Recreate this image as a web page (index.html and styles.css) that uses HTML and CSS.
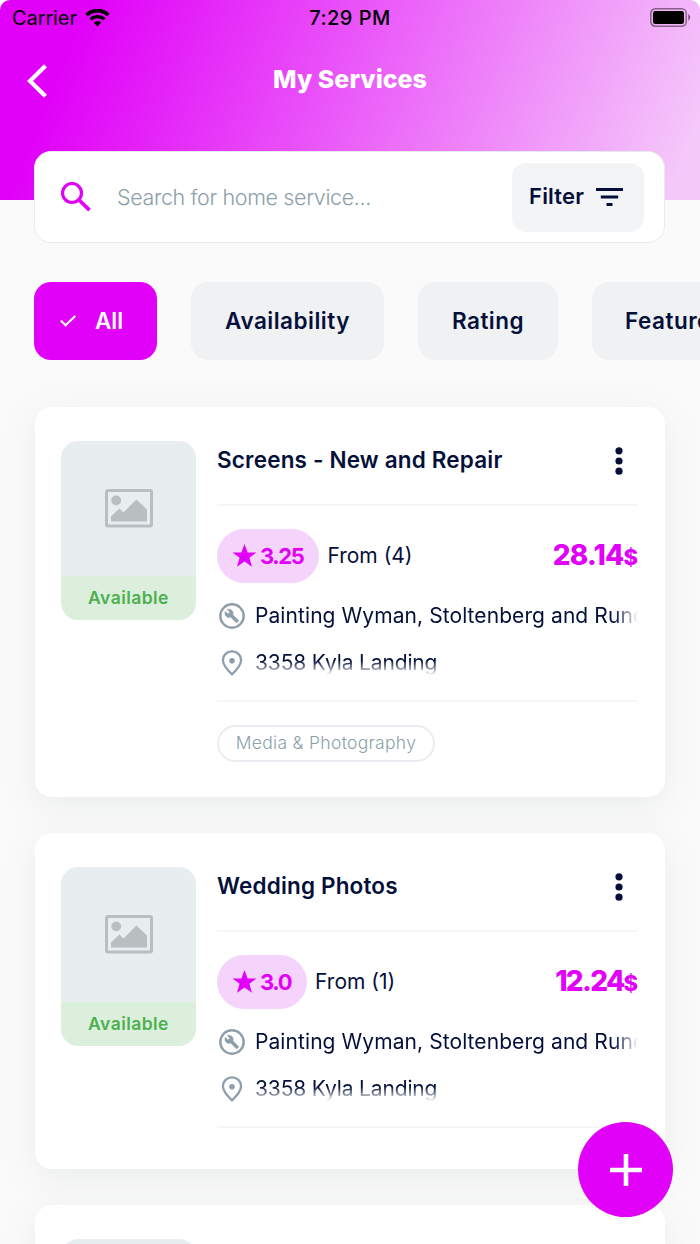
FILE: index.html
```
<!DOCTYPE html>
<html lang="en">
<head>
    <meta charset="UTF-8">
    <meta name="viewport" content="width=device-width, initial-scale=1.0">
    <title>My Services</title>
    <link rel="stylesheet" href="styles.css">
</head>
<body>

    <!-- Shared icons -->
    <svg class="sprite" width="0" height="0">
        <symbol id="icon-picture" viewBox="0 0 48 39">
            <rect x="1.5" y="1.5" width="45" height="35.5" rx="1.5" fill="none" stroke="currentColor" stroke-width="3"/>
            <circle cx="11.2" cy="11.4" r="4.9" fill="currentColor"/>
            <path d="M6 32.5V27.5L14.4 19.5L18.5 23.5L31.4 10.5L42 20.5V32.5Z" fill="currentColor"/>
        </symbol>
        <symbol id="icon-star" viewBox="0 0 24 24">
            <path d="M12 0L15.1 8.4H24L16.9 13.7L19.5 22.8L12 17.5L4.5 22.8L7.1 13.7L0 8.4H8.9Z" fill="currentColor"/>
        </symbol>
        <symbol id="icon-build" viewBox="0 0 26 26">
            <circle cx="13" cy="13" r="11.7" fill="none" stroke="currentColor" stroke-width="2.4"/>
            <path d="M19.4 17.3L13.9 11.8C14.5 10.3 14.2 8.6 13 7.4C11.7 6.1 9.8 5.8 8.2 6.5L10.9 9.2L9 11.1L6.3 8.4C5.5 10 5.9 11.9 7.2 13.2C8.4 14.4 10.1 14.7 11.6 14.1L17.1 19.6C17.4 19.9 17.8 19.9 18.1 19.6L19.4 18.3C19.7 18 19.7 17.6 19.4 17.3Z" fill="currentColor" stroke="currentColor" stroke-width="0.5"/>
        </symbol>
        <symbol id="icon-place" viewBox="0 0 26 26">
            <path d="M13 1.4C7.9 1.4 3.9 5.2 3.9 10.1C3.9 14.5 7 18.8 13 24.3C19 18.8 22.1 14.5 22.1 10.1C22.1 5.2 18.1 1.4 13 1.4Z" fill="none" stroke="currentColor" stroke-width="2.3"/>
            <circle cx="13" cy="10.8" r="2.8" fill="currentColor"/>
        </symbol>
        <symbol id="icon-more" viewBox="0 0 8 28">
            <circle cx="4" cy="3.8" r="3.6" fill="currentColor"/>
            <circle cx="4" cy="14" r="3.6" fill="currentColor"/>
            <circle cx="4" cy="24.2" r="3.6" fill="currentColor"/>
        </symbol>
    </svg>

    <div class="screen">
        <header class="header">
            <div class="status-bar">
                <div class="carrier">
                    <span>Carrier</span>
                    <svg width="25" height="18" viewBox="0 0 25 18">
                        <path d="M1.6 6A15.6 15.6 0 0 1 23.4 6" fill="none" stroke="#000" stroke-width="3.7"/>
                        <path d="M5.7 10.4A9.7 9.7 0 0 1 19.3 10.4" fill="none" stroke="#000" stroke-width="3.2"/>
                        <path d="M12.5 17.4L8.7 13.6A5.4 5.4 0 0 1 16.3 13.6Z" fill="#000"/>
                    </svg>
                </div>
                <span class="time">7:29 PM</span>
                <svg class="battery" width="41" height="19" viewBox="0 0 41 19">
                    <rect x="0.8" y="0.8" width="35.4" height="17.4" rx="4.5" fill="none" stroke="#000" stroke-opacity="0.45" stroke-width="1.5"/>
                    <rect x="3" y="3" width="31" height="13" rx="2.5" fill="#000"/>
                    <path d="M38.2 6.3C40.9 7.4 40.9 11.6 38.2 12.7Z" fill="#000" fill-opacity="0.5"/>
                </svg>
            </div>
            <div class="nav-bar">
                <svg class="back" width="21" height="34" viewBox="0 0 21 34">
                    <path d="M18.5 1.7L3 17L18.5 32.3" fill="none" stroke="#fff" stroke-width="4.2"/>
                </svg>
                <h1>My Services</h1>
            </div>
        </header>

        <div class="search">
            <svg width="30" height="30" viewBox="0 0 30 30">
                <circle cx="11" cy="11" r="9.5" fill="none" stroke="currentColor" stroke-width="3.2"/>
                <path d="M18 18L28.5 28.2" stroke="currentColor" stroke-width="3.8"/>
            </svg>
            <span class="placeholder">Search for home service...</span>
            <button class="filter">
                <span>Filter</span>
                <svg width="27" height="18" viewBox="0 0 27 18">
                    <path d="M0 1.6H27M4.8 9H22.2M10.5 16.4H16.5" stroke="currentColor" stroke-width="3"/>
                </svg>
            </button>
        </div>

        <nav class="tabs">
            <a class="tab active">
                <svg width="16" height="12" viewBox="0 0 16 12">
                    <path d="M0.8 5.6L5.6 10.3L15.2 1" fill="none" stroke="#fff" stroke-width="2.1"/>
                </svg>
                <span>All</span>
            </a>
            <a class="tab tab-availability"><span>Availability</span></a>
            <a class="tab tab-rating"><span>Rating</span></a>
            <a class="tab tab-featured"><span>Featured</span></a>
        </nav>

        <main class="services">
            <article class="card">
                <div class="thumb">
                    <div class="picture"><svg width="48" height="39"><use href="#icon-picture"/></svg></div>
                    <div class="status">Available</div>
                </div>
                <div class="details">
                    <div class="title-row">
                        <h2>Screens - New and Repair</h2>
                        <svg width="8" height="28"><use href="#icon-more"/></svg>
                    </div>
                    <div class="rating-row">
                        <span class="badge"><svg width="25" height="24"><use href="#icon-star"/></svg><b>3.25</b></span>
                        <span class="from">From (4)</span>
                        <span class="price">28.14<small>$</small></span>
                    </div>
                    <div class="info">
                        <svg width="26" height="26"><use href="#icon-build"/></svg>
                        <span class="provider">Painting Wyman, Stoltenberg and Runolfsson</span>
                    </div>
                    <div class="info">
                        <svg width="26" height="26"><use href="#icon-place"/></svg>
                        <span class="address">3358 Kyla Landing</span>
                    </div>
                    <div class="categories"><span class="chip">Media &amp; Photography</span></div>
                </div>
            </article>

            <article class="card">
                <div class="thumb">
                    <div class="picture"><svg width="48" height="39"><use href="#icon-picture"/></svg></div>
                    <div class="status">Available</div>
                </div>
                <div class="details">
                    <div class="title-row">
                        <h2>Wedding Photos</h2>
                        <svg width="8" height="28"><use href="#icon-more"/></svg>
                    </div>
                    <div class="rating-row">
                        <span class="badge"><svg width="25" height="24"><use href="#icon-star"/></svg><b>3.0</b></span>
                        <span class="from">From (1)</span>
                        <span class="price tight">12.24<small>$</small></span>
                    </div>
                    <div class="info">
                        <svg width="26" height="26"><use href="#icon-build"/></svg>
                        <span class="provider">Painting Wyman, Stoltenberg and Runolfsson</span>
                    </div>
                    <div class="info">
                        <svg width="26" height="26"><use href="#icon-place"/></svg>
                        <span class="address">3358 Kyla Landing</span>
                    </div>
                    <div class="categories empty"></div>
                </div>
            </article>

            <article class="card">
                <div class="thumb">
                    <div class="picture"></div>
                </div>
            </article>
        </main>

        <button class="add">
            <svg width="32" height="32" viewBox="0 0 32 32">
                <path d="M16 0V32M0 16H32" stroke="#fff" stroke-width="4.6"/>
            </svg>
        </button>
    </div>

</body>
</html>
```
FILE: styles.css
```
/* Basic Reset */
* {
    margin: 0;
    padding: 0;
    box-sizing: border-box;
}

body {
    font-family: "Inter", "Open Sans", sans-serif;
    background-color: #fff;
    color: #04103a;
    overflow: hidden;
}

svg {
    display: block;
    flex: none;
}

button {
    border: none;
    font-family: inherit;
    color: inherit;
    cursor: pointer;
}

.sprite {
    position: absolute;
}

.screen {
    position: relative;
    width: 700px;
    height: 1244px;
    overflow: hidden;
    background-color: #fafafa;
    border-radius: 10px 10px 0 0;
}

/* Header */
.header {
    height: 200px;
    background: linear-gradient(112deg, #e100f8 11%, #f5c8fa 96%);
}

.status-bar {
    display: grid;
    grid-template-columns: 1fr auto 1fr;
    align-items: center;
    height: 35px;
    padding: 0 9px 0 12px;
    color: #000;
    font-size: 20px;
}

.carrier {
    display: flex;
    align-items: center;
    gap: 9px;
}

.carrier span {
    width: 64px;
    letter-spacing: -0.1px;
}

.time {
    padding-right: 3px;
    font-weight: 500;
    letter-spacing: 0.45px;
}

.battery {
    justify-self: end;
}

.nav-bar {
    display: grid;
    grid-template-columns: 1fr auto 1fr;
    align-items: center;
    height: 92px;
    padding: 0 27px;
}

.nav-bar h1 {
    padding-bottom: 4px;
    color: #fff;
    font-size: 25px;
    font-weight: 800;
}

/* Search */
.search {
    display: flex;
    align-items: center;
    height: 92px;
    margin: -49px 35px 0 34px;
    padding: 0 20px 0 26px;
    background-color: #fff;
    border: 1px solid #e6eaee;
    border-radius: 17px;
    color: #e100f8;
}

.placeholder {
    flex: 1;
    margin-left: 26px;
    padding-bottom: 1px;
    color: #8c9faa;
    font-size: 21.5px;
    font-weight: 300;
    letter-spacing: -0.37px;
    white-space: nowrap;
}

.filter {
    display: flex;
    align-items: center;
    width: 132px;
    height: 69px;
    padding-left: 17px;
    background-color: #f3f4f6;
    border-radius: 14px;
    color: #04103a;
    font-size: 22px;
    font-weight: 600;
    letter-spacing: 0.2px;
}

.filter span {
    width: 67px;
    padding-bottom: 2px;
    text-align: left;
}

/* Tabs */
.tabs {
    display: flex;
    gap: 34px;
    margin: 39px 0 0 34px;
}

.tab {
    display: flex;
    flex: none;
    align-items: center;
    justify-content: center;
    height: 78px;
    background-color: #eff1f3;
    border-radius: 17px;
    font-size: 22.5px;
    font-weight: 600;
    letter-spacing: 0.5px;
}

.tab span {
    padding-bottom: 2px;
}

.tab.active {
    justify-content: flex-start;
    width: 123px;
    padding-left: 26px;
    gap: 19px;
    background-color: #e100f8;
    color: #fff;
    letter-spacing: 0;
}

.tab-availability {
    width: 193px;
}

.tab-rating {
    width: 140px;
}

.tab-featured {
    justify-content: flex-start;
    width: 170px;
    padding-left: 33px;
}

/* Service cards */
.services {
    display: flex;
    flex-direction: column;
    gap: 36px;
    margin: 47px 35px 0;
}

.card {
    display: flex;
    gap: 21px;
    padding: 34px 27px 35px 26px;
    background-color: #fff;
    border-radius: 17px;
    box-shadow: 0 9px 34px rgba(120, 140, 150, 0.12);
}

.thumb {
    flex: none;
    width: 135px;
}

.picture {
    display: flex;
    align-items: center;
    justify-content: center;
    height: 135px;
    background-color: #e8edf0;
    border-radius: 17px 17px 0 0;
    color: #b9bec1;
}

.status {
    height: 44px;
    background-color: #dbefdc;
    border-radius: 0 0 17px 17px;
    color: #4caf50;
    font-size: 17.5px;
    font-weight: 600;
    letter-spacing: 0.45px;
    line-height: 43px;
    text-align: center;
}

.details {
    flex: 1;
    min-width: 0;
}

.title-row {
    display: flex;
    align-items: center;
    justify-content: space-between;
    height: 65px;
    padding: 0 15px 24px 0;
    border-bottom: 2px solid #f5f6f7;
}

.title-row h2 {
    padding-bottom: 2px;
    font-size: 22.5px;
    font-weight: 600;
    letter-spacing: 0.17px;
}

.rating-row {
    display: flex;
    align-items: center;
    height: 54px;
    margin: 23px 0 9px;
}

.badge {
    display: flex;
    align-items: center;
    gap: 3px;
    height: 54px;
    padding: 0 16px 0 15px;
    background-color: #f5d4fb;
    border-radius: 27px;
    color: #e100f8;
    font-size: 22px;
    letter-spacing: -1.4px;
}

.badge b {
    font-weight: 650;
}

.from {
    flex: 1;
    margin-left: 8px;
    padding-bottom: 2px;
    font-size: 21px;
    font-weight: 400;
}

.price {
    padding-bottom: 2px;
    color: #e100f8;
    font-size: 28px;
    font-weight: 800;
    letter-spacing: -0.8px;
}

.price.tight {
    letter-spacing: -1.7px;
}

.price small {
    font-size: 22px;
    letter-spacing: 0;
}

.info {
    display: flex;
    align-items: center;
    gap: 10px;
    height: 47px;
    padding-left: 2px;
    color: #8c9faa;
}

.info span {
    flex: 1;
    min-width: 0;
    overflow: hidden;
    color: #04103a;
    font-size: 21px;
    white-space: nowrap;
}

/* Long names fade out to the right, addresses to the bottom */
.info .provider {
    letter-spacing: 0.08px;
    mask-image: linear-gradient(to right, #000 calc(100% - 24px), transparent);
}

.info .address {
    height: 24px;
    letter-spacing: -0.15px;
    line-height: 24px;
    mask-image: linear-gradient(to bottom, #000 40%, transparent);
}

.categories {
    margin-top: 14px;
    padding-top: 23px;
    border-top: 2px solid #f5f6f7;
}

.categories.empty {
    padding-top: 6px;
}

.chip {
    display: flex;
    align-items: center;
    justify-content: center;
    width: 218px;
    height: 37px;
    padding-bottom: 2px;
    border: 2px solid #e9edf1;
    border-radius: 19px;
    color: #8c9faa;
    font-size: 17.5px;
    font-weight: 300;
    letter-spacing: 0.3px;
}

/* Floating button */
.add {
    position: absolute;
    right: 27px;
    bottom: 27px;
    display: flex;
    align-items: center;
    justify-content: center;
    width: 95px;
    height: 95px;
    background-color: #e100f8;
    border-radius: 50%;
}
```
